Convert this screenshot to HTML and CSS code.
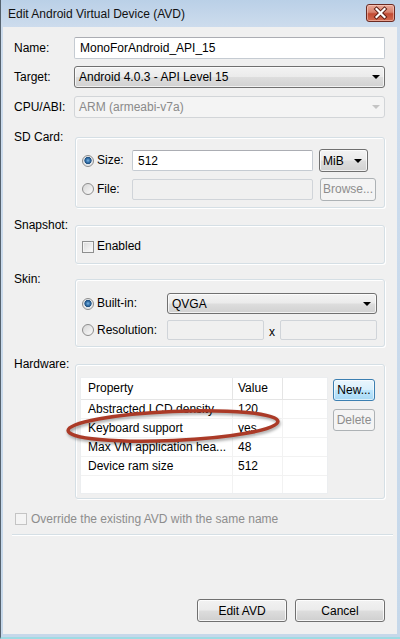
FILE: index.html
```html
<!DOCTYPE html>
<html>
<head>
<meta charset="utf-8">
<title>Edit Android Virtual Device (AVD)</title>
<link rel="stylesheet" href="styles.css">
</head>
<body>
<div class="window">
  <div class="titlebar">
    <span class="title">Edit Android Virtual Device (AVD)</span>
    <span class="close">
      <svg width="29" height="18" viewBox="0 0 29 18">
        <path d="M10.5 5 L18.5 13 M18.5 5 L10.5 13" stroke="#5a1a10" stroke-width="4" stroke-linecap="square"/>
        <path d="M10.5 5 L18.5 13 M18.5 5 L10.5 13" stroke="#ffffff" stroke-width="2.2" stroke-linecap="square"/>
      </svg>
    </span>
  </div>
  <div class="client">
    <div class="row r-name">
      <span class="lbl">Name:</span>
      <div class="input wide">MonoForAndroid_API_15</div>
    </div>
    <div class="row r-target">
      <span class="lbl">Target:</span>
      <div class="combo wide"><span>Android 4.0.3 - API Level 15</span><i class="arrow"></i></div>
    </div>
    <div class="row r-cpu">
      <span class="lbl">CPU/ABI:</span>
      <div class="combo wide disabled"><span>ARM (armeabi-v7a)</span><i class="arrow"></i></div>
    </div>

    <div class="row grow r-sd">
      <span class="lbl glbl">SD Card:</span>
      <div class="group g-sd">
        <div class="line l-size">
          <span class="opt o-sd"><i class="radio on"></i>Size:</span>
          <div class="input i-size">512</div>
          <div class="combo c-mib"><span>MiB</span><i class="arrow"></i></div>
        </div>
        <div class="line l-file">
          <span class="opt o-sd"><i class="radio"></i>File:</span>
          <div class="input i-file disabled"></div>
          <div class="btn b-browse disabled">Browse...</div>
        </div>
      </div>
    </div>

    <div class="row grow r-snap">
      <span class="lbl glbl">Snapshot:</span>
      <div class="group g-snap">
        <span class="opt"><i class="check"></i>Enabled</span>
      </div>
    </div>

    <div class="row grow r-skin">
      <span class="lbl glbl">Skin:</span>
      <div class="group g-skin">
        <div class="line l-builtin">
          <span class="opt o-skin"><i class="radio on"></i>Built-in:</span>
          <div class="combo c-skin"><span>QVGA</span><i class="arrow"></i></div>
        </div>
        <div class="line l-res">
          <span class="opt o-skin"><i class="radio"></i>Resolution:</span>
          <div class="input i-res disabled"></div>
          <span class="times">x</span>
          <div class="input i-res disabled"></div>
        </div>
      </div>
    </div>

    <div class="row grow r-hw">
      <span class="lbl glbl">Hardware:</span>
      <div class="group g-hw">
        <div class="table">
          <div class="th">Property</div><div class="th">Value</div><div class="th"></div>
          <div class="td">Abstracted LCD density</div><div class="td">120</div><div class="td"></div>
          <div class="td">Keyboard support</div><div class="td">yes</div><div class="td"></div>
          <div class="td">Max VM application hea...</div><div class="td">48</div><div class="td"></div>
          <div class="td">Device ram size</div><div class="td">512</div><div class="td"></div>
          <div class="tf"></div><div class="tf"></div><div class="tf"></div>
        </div>
        <div class="hwbtns">
          <div class="btn b-new focus">New...</div>
          <div class="btn b-del disabled">Delete</div>
        </div>
      </div>
    </div>

    <div class="override">
      <i class="check disabled"></i><span>Override the existing AVD with the same name</span>
    </div>
    <div class="sep"></div>
    <div class="spacer"></div>
    <div class="buttons">
      <div class="btn b-main">Edit AVD</div>
      <div class="btn b-main">Cancel</div>
    </div>
  </div>

  <svg class="mark" width="240" height="60" viewBox="0 0 240 60">
    <ellipse cx="114" cy="27" rx="105" ry="14.5" transform="rotate(-2.5 114 27)" fill="none" stroke="#ab3a27" stroke-width="3.5"/>
  </svg>
</div>
</body>
</html>
```
FILE: styles.css
```css
* { box-sizing: border-box; margin: 0; padding: 0; }
html, body { margin: 0; background: #c3d6e9; }
body {
  font-family: "Liberation Sans", Arial, sans-serif;
  font-size: 12px;
  color: #000;
}

.window {
  position: relative;
  width: 400px;
  height: 639px;
  display: flex;
  flex-direction: column;
  background: linear-gradient(#bad0e7 0, #cddced 27px, #c6d8ea 100%);
  border-left: 1px solid #55626e;
  border-bottom: 2px solid #9fdbe3;
}

/* Title bar */
.titlebar {
  height: 27px;
  flex: none;
  display: flex;
  align-items: flex-start;
  padding-left: 7px;
}
.title {
  line-height: 15px;
  margin-top: 7px;
  color: #111;
}
.close {
  margin-left: auto;
  margin-right: 5px;
  margin-top: 4px;
  width: 29px;
  height: 18px;
  border: 1px solid #6b2a22;
  border-radius: 3px;
  background: linear-gradient(#e9a99a 0%, #d8826e 45%, #c24a33 55%, #d36b50 100%);
  box-shadow: inset 0 0 0 1px rgba(255, 220, 210, .5);
  display: flex;
}
.close svg { display: block; margin: -1px; }

/* Client area */
.client {
  flex: 1;
  margin: 0 3px 3px 2px;
  background: #f0f0f0;
  padding: 10px 11px 12px 11px;
  display: flex;
  flex-direction: column;
}

.row { display: flex; align-items: center; height: 22px; flex: none; }
.row.grow { height: auto; align-items: flex-start; }
.lbl { width: 60px; flex: none; line-height: 15px; }
.glbl { margin-top: -7px; }

.r-target { margin-top: 7px; }
.r-cpu { margin-top: 8px; }
.r-sd { margin-top: 19px; }
.r-snap { margin-top: 17px; }
.r-skin { margin-top: 15px; }
.r-hw { margin-top: 17px; }

.wide { width: 311px; height: 22px; }

/* Text input */
.input {
  background: #fff;
  border: 1px solid #c5cbd2;
  border-top-color: #abadb3;
  border-radius: 2px;
  padding-left: 5px;
  line-height: 20px;
  white-space: nowrap;
  overflow: hidden;
}
.input.disabled {
  background: #f0f0f0;
  border-color: #d0d4d9;
}

/* Combo */
.combo {
  display: flex;
  align-items: center;
  border: 1px solid #707070;
  border-radius: 3px;
  background: linear-gradient(#f3f3f3 0%, #ebebeb 48%, #dddddd 52%, #d1d1d1 100%);
  box-shadow: inset 0 0 0 1px rgba(255, 255, 255, .7);
  padding-left: 4px;
  padding-right: 4px;
  white-space: nowrap;
}
.combo span { flex: 1; }
.arrow {
  width: 0; height: 0;
  border-left: 4px solid transparent;
  border-right: 4px solid transparent;
  border-top: 4px solid #000;
}
.combo.disabled {
  background: #f4f4f4;
  border-color: #d2d5d8;
  box-shadow: none;
  color: #8a8a8a;
}
.combo.disabled .arrow { border-top-color: #c4c4c4; }

/* Group boxes */
.group {
  width: 310px;
  margin-left: 1px;
  border: 1px solid #d5dfe5;
  border-radius: 3px;
  box-shadow: inset 1px 1px 0 #fff, 1px 1px 0 #fff;
}
.g-sd { padding: 12px 7px 7px 6px; }
.g-snap { padding: 13px 0 9px 6px; display: flex; }
.g-skin { padding: 13px 7px 6px 6px; }
.g-hw { padding: 12px 0 4px 4px; display: flex; align-items: flex-start; }

.line { display: flex; align-items: center; }
.l-size { height: 21px; }
.l-file { height: 22px; margin-top: 7px; }
.l-builtin { height: 21px; }
.l-res { height: 20px; margin-top: 6px; }

.opt {
  display: flex;
  align-items: center;
  line-height: 15px;
  white-space: nowrap;
}
.o-sd { width: 50px; flex: none; }
.o-skin { width: 85px; flex: none; }

.i-size { width: 181px; height: 21px; }
.c-mib { width: 49px; height: 23px; margin-left: 6px; padding-left: 3px; padding-right: 5px; }
.i-file { width: 181px; height: 21px; }
.b-browse { width: 56px; height: 23px; margin-left: 7px; }

.c-skin { width: 210px; height: 21px; padding-right: 5px; }
.i-res { width: 97px; height: 20px; }
.times { width: 16px; text-align: center; padding-top: 3px; }

/* Radio / check */
.radio {
  width: 12px; height: 12px;
  flex: none;
  border-radius: 50%;
  border: 1px solid #8d8d8d;
  background: linear-gradient(135deg, #d6d6d6, #fbfbfb);
  margin-right: 3px;
}
.radio.on {
  background: radial-gradient(circle at 50% 45%, #7fb6e4 0, #3a78b0 1.8px, #1d4e7f 3.3px, #dfe3e7 3.9px, #f7f7f7 100%);
}
.check {
  width: 12px; height: 12px;
  flex: none;
  border: 1px solid #8e8f8f;
  background: linear-gradient(135deg, #dadada, #fdfdfd);
  box-shadow: inset 0 0 0 1px #f4f4f4;
  margin-right: 3px;
}
.check.disabled {
  border-color: #c4c4c4;
  background: #f4f4f4;
  box-shadow: none;
}

/* Buttons */
.btn {
  display: flex;
  align-items: center;
  justify-content: center;
  border: 1px solid #707070;
  border-radius: 3px;
  background: linear-gradient(#f2f2f2 0%, #ebebeb 48%, #dddddd 52%, #cfcfcf 100%);
  box-shadow: inset 0 0 0 1px rgba(255, 255, 255, .8);
  white-space: nowrap;
}
.btn.disabled {
  background: #f4f4f4;
  border-color: #adb2b5;
  box-shadow: none;
  color: #8d8d8d;
}
.btn.focus {
  border-color: #3c7fb1;
  background: linear-gradient(#eaf6fd 0%, #d9f0fc 48%, #bee6fd 52%, #a7d9f5 100%);
  box-shadow: inset 0 0 0 1px rgba(255, 255, 255, .6);
}

/* Table */
.table {
  width: 248px;
  height: 117px;
  flex: none;
  background: #fff;
  border: 1px solid #eceef0;
  display: grid;
  grid-template-columns: 152px 50px 1fr;
  grid-template-rows: 22px repeat(4, 19px) 1fr;
}
.th, .td {
  white-space: nowrap;
  overflow: hidden;
  line-height: 18px;
}
.th {
  padding-left: 7px;
  border-right: 1px solid #e5e5e5;
  border-bottom: 1px solid #e5e5e5;
  line-height: 21px;
}
.th:nth-child(3n+2) { padding-left: 5px; }
.th:nth-child(3n) { border-right: none; }
.td {
  padding-left: 7px;
  border-right: 1px solid #f2f2f2;
  border-bottom: 1px solid #f2f2f2;
}
.td:nth-child(3n+2) { padding-left: 5px; }
.td:nth-child(3n) { border-right: none; }
.tf { border-right: 1px solid #f2f2f2; }
.tf:nth-child(3n) { border-right: none; }

.hwbtns {
  display: flex;
  flex-direction: column;
  margin-left: 5px;
  margin-top: 2px;
}
.b-new { width: 42px; height: 22px; }
.b-del { width: 42px; height: 22px; margin-top: 8px; }

/* Bottom */
.override {
  display: flex;
  align-items: center;
  margin-top: 12px;
  height: 15px;
  color: #8d8d8d;
  padding-left: 1px;
}
.override .check { margin-right: 4px; }
.sep {
  height: 2px;
  margin: 8px -7px 0 -2px;
  border-top: 1px solid #d5dfe5;
  border-bottom: 1px solid #fff;
}
.spacer { flex: 1; }
.buttons {
  display: flex;
  justify-content: flex-end;
  gap: 8px;
  margin-right: 1px;
}
.b-main { width: 90px; height: 23px; }

/* Annotation overlay */
.mark {
  position: absolute;
  left: 58px;
  top: 399px;
  filter: drop-shadow(1px 2px 1.5px rgba(0, 0, 0, .35));
}
```
